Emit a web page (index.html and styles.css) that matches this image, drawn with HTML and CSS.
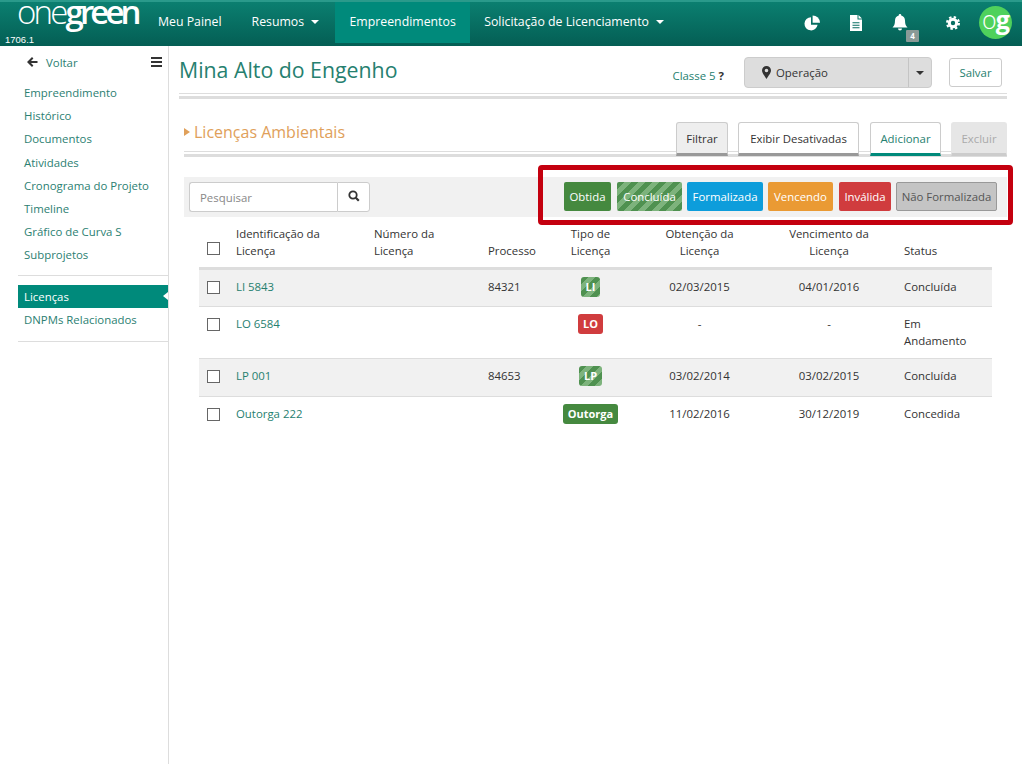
FILE: index.html
```html
<!DOCTYPE html>
<html lang="pt-BR">
<head>
    <meta charset="UTF-8">
    <title>Licenças Ambientais - onegreen</title>
    <link rel="stylesheet" href="styles.css">
</head>
<body>
    <header class="topbar">
        <div class="brand">
            <svg class="logo" width="126" height="34" viewBox="0 0 126 34"><text x="0" y="22"><tspan class="logo-one">one</tspan><tspan class="logo-green">green</tspan></text></svg>
            <div class="version">1706.1</div>
        </div>
        <nav class="topnav">
            <a class="topnav-item">Meu Painel</a>
            <a class="topnav-item">Resumos <i class="caret"></i></a>
            <a class="topnav-item active">Empreendimentos</a>
            <a class="topnav-item">Solicitação de Licenciamento <i class="caret"></i></a>
        </nav>
        <div class="topicons">
            <svg class="ico" width="16" height="16" viewBox="0 0 16 16"><path d="M7 2.2a6.600 6.600 0 1 0 6.600 7.600H7z"/><path d="M8.400 .8v7.400H15.800A7.400 7.400 0 0 0 8.400 .8z" transform="translate(.2 -.4)"/></svg>
            <svg class="ico" width="14" height="16" viewBox="0 0 14 16"><path fill-rule="evenodd" d="M1 0h7.500v4.500H13V16H1zM9.500 0 13 3.500H9.500zM3.500 7.200v1.100h7V7.200zM3.500 9.700v1.100h7V9.700zM3.500 12.200v1.100h7v-1.100z"/></svg>
            <div class="bell">
                <svg class="ico" width="16" height="17" viewBox="0 0 16 17"><path d="M8 0a1.200 1.200 0 0 1 1.200 1.400C11.600 1.900 13 4 13 6.500c0 4 1 5.500 2.500 7H.5C2 12 3 10.500 3 6.500 3 4 4.400 1.900 6.800 1.400A1.200 1.200 0 0 1 8 0zM6 14.500h4a2 2 0 0 1-4 0z"/></svg>
                <span class="bell-count">4</span>
            </div>
            <svg class="ico" width="14" height="14" viewBox="0 0 14 14"><circle cx="7" cy="7" r="3.700" fill="none" stroke="#fff" stroke-width="3"/><circle cx="7" cy="7" r="5.900" fill="none" stroke="#fff" stroke-width="2.200" stroke-dasharray="2.400 2.230"/></svg>
            <div class="avatar"><span class="avatar-o">o</span><span class="avatar-g">g</span></div>
        </div>
    </header>

    <div class="page">
        <aside class="sidebar">
            <div class="back-row">
                <svg class="back-arrow" width="12" height="12" viewBox="0 0 12 12"><path d="M6 1 1 6l5 5 1.400-1.400L5 7.100h6.500V4.900H5l2.400-2.500z"/></svg>
                <span class="back-label">Voltar</span>
                <svg class="menu-ico" width="11" height="10" viewBox="0 0 11 10"><path d="M0 0h11v2H0zM0 4h11v2H0zM0 8h11v2H0z"/></svg>
            </div>
            <ul class="side-list">
                <li>Empreendimento</li>
                <li>Histórico</li>
                <li>Documentos</li>
                <li>Atividades</li>
                <li>Cronograma do Projeto</li>
                <li>Timeline</li>
                <li>Gráfico de Curva S</li>
                <li>Subprojetos</li>
            </ul>
            <ul class="side-list second">
                <li class="active">Licenças</li>
                <li>DNPMs Relacionados</li>
            </ul>
        </aside>

        <main class="content">
            <div class="title-row">
                <h1>Mina Alto do Engenho</h1>
                <span class="classe">Classe 5 <b>?</b></span>
                <div class="phase">
                    <div class="phase-value">
                        <svg width="9" height="13" viewBox="0 0 9 13"><path fill-rule="evenodd" d="M4.500 0A4.500 4.500 0 0 1 9 4.500C9 7 6 10.500 4.500 13 3 10.500 0 7 0 4.500A4.500 4.500 0 0 1 4.500 0zm0 2.700a1.800 1.800 0 1 0 0 3.600 1.800 1.800 0 0 0 0-3.600z"/></svg>
                        Operação
                    </div>
                    <div class="phase-arrow"><i class="caret dark"></i></div>
                </div>
                <button class="btn-save">Salvar</button>
            </div>

            <section class="licences">
                <div class="section-head">
                    <h2>Licenças Ambientais</h2>
                    <div class="actions">
                        <button class="tab-btn pressed">Filtrar</button>
                        <button class="tab-btn show-off">Exibir Desativadas</button>
                        <button class="tab-btn add">Adicionar</button>
                        <button class="tab-btn off">Excluir</button>
                    </div>
                </div>

                <div class="toolbar">
                    <div class="search">
                        <input type="text" placeholder="Pesquisar">
                        <button>
                            <svg width="12" height="12" viewBox="0 0 12 12"><circle cx="5" cy="5" r="3.700" fill="none" stroke="#333" stroke-width="1.800"/><path d="m7.800 7.800 3 3" stroke="#333" stroke-width="2.200"/></svg>
                        </button>
                    </div>
                    <div class="legend">
                        <span class="chip chip-obtida green">Obtida</span>
                        <span class="chip chip-concluida stripes">Concluída</span>
                        <span class="chip chip-formalizada blue">Formalizada</span>
                        <span class="chip chip-vencendo orange">Vencendo</span>
                        <span class="chip chip-invalida red">Inválida</span>
                        <span class="chip chip-nao grey">Não Formalizada</span>
                    </div>
                    <div class="highlight"></div>
                </div>

                <table class="grid">
                    <thead>
                        <tr>
                            <th class="col-check"><i class="box"></i></th>
                            <th class="col-id">Identificação da Licença</th>
                            <th class="col-num">Número da Licença</th>
                            <th class="col-proc">Processo</th>
                            <th class="col-type mid">Tipo de Licença</th>
                            <th class="col-date mid">Obtenção da Licença</th>
                            <th class="col-date2 mid">Vencimento da Licença</th>
                            <th class="col-status">Status</th>
                        </tr>
                    </thead>
                    <tbody>
                        <tr class="odd">
                            <td><i class="box"></i></td>
                            <td class="link">LI 5843</td>
                            <td></td>
                            <td>84321</td>
                            <td class="mid"><span class="tag stripes">LI</span></td>
                            <td class="mid">02/03/2015</td>
                            <td class="mid">04/01/2016</td>
                            <td class="status">Concluída</td>
                        </tr>
                        <tr>
                            <td><i class="box"></i></td>
                            <td class="link">LO 6584</td>
                            <td></td>
                            <td></td>
                            <td class="mid"><span class="tag red">LO</span></td>
                            <td class="mid">-</td>
                            <td class="mid">-</td>
                            <td class="status">Em Andamento</td>
                        </tr>
                        <tr class="odd">
                            <td><i class="box"></i></td>
                            <td class="link">LP 001</td>
                            <td></td>
                            <td>84653</td>
                            <td class="mid"><span class="tag stripes">LP</span></td>
                            <td class="mid">03/02/2014</td>
                            <td class="mid">03/02/2015</td>
                            <td class="status">Concluída</td>
                        </tr>
                        <tr>
                            <td><i class="box"></i></td>
                            <td class="link">Outorga 222</td>
                            <td></td>
                            <td></td>
                            <td class="mid"><span class="tag green">Outorga</span></td>
                            <td class="mid">11/02/2016</td>
                            <td class="mid">30/12/2019</td>
                            <td class="status">Concedida</td>
                        </tr>
                    </tbody>
                </table>
            </section>
        </main>
    </div>
</body>
</html>
```

FILE: styles.css
```css
* {
    box-sizing: border-box;
}

html, body {
    height: 100%;
}

body {
    margin: 0;
    font-family: "Open Sans", "Noto Sans", sans-serif;
    font-size: 11.400px;
    color: #333;
    background: #fff;
    overflow: hidden;
}

/* top bar */
.topbar {
    height: 46px;
    display: flex;
    color: #fff;
    background: linear-gradient(to bottom, #0b7f70, #045e54);
    border-top: 2px solid #2a9a8b;
    padding-bottom: 3px;
}

.brand {
    width: 144px;
    position: relative;
}

.logo {
    display: block;
    margin-left: 17px;
    fill: #fff;
    font-family: "Open Sans", sans-serif;
    font-size: 33px;
}

.logo-one {
    font-weight: 300;
    letter-spacing: -2.800px;
}

.logo-green {
    font-weight: 600;
    letter-spacing: -3.900px;
}

.version {
    position: absolute;
    left: 5px;
    bottom: -3px;
    font-family: "Liberation Sans", sans-serif;
    font-size: 9.500px;
    line-height: 12px;
}

.topnav {
    display: flex;
}

.topnav-item {
    display: flex;
    align-items: center;
    gap: 6px;
    padding: 0 16px 2px 14px;
    font-size: 12.300px;
}

.topnav-item.active {
    width: 135px;
    padding: 0 0 2px;
    justify-content: center;
    background: #008a7b;
}

.caret {
    display: inline-block;
    margin-left: 1px;
    border-top: 4px solid #fff;
    border-left: 4px solid transparent;
    border-right: 4px solid transparent;
}

.caret.dark {
    margin: 0;
    border-top-color: #333;
}

.topicons {
    margin-left: auto;
    display: flex;
    align-items: center;
    gap: 29px;
    padding-right: 10px;
}

.ico {
    fill: #fff;
    display: block;
}

.bell {
    position: relative;
    margin-right: 9px;
}

.bell-count {
    position: absolute;
    left: 14px;
    top: 16px;
    width: 13px;
    height: 12px;
    background: #8a9a97;
    border-radius: 1px;
    font-size: 8px;
    line-height: 12px;
    text-align: center;
    font-weight: 700;
}

.avatar {
    width: 33px;
    height: 33px;
    margin-left: -10px;
    border-radius: 50%;
    background: #4fd15c;
    text-align: center;
    font-size: 25px;
    line-height: 26px;
    letter-spacing: -1px;
}

.avatar-o {
    font-weight: 300;
}

.avatar-g {
    font-weight: 700;
}

/* layout */
.page {
    display: flex;
    height: 718px;
}

.sidebar {
    width: 169px;
    flex: none;
    border-right: 1px solid #ddd;
    padding-left: 18px;
    color: #2b8072;
}

.back-row {
    height: 32px;
    display: flex;
    align-items: center;
    padding: 0 6px 0 8px;
}

.back-arrow {
    fill: #333;
}

.back-label {
    margin-left: 8px;
}

.menu-ico {
    fill: #333;
    margin-left: auto;
}

.side-list {
    list-style: none;
    margin: 3px 0 0;
    padding: 0 0 8px;
    border-bottom: 1px solid #ddd;
}

.side-list li {
    height: 23.200px;
    line-height: 23.200px;
    padding-left: 6px;
    white-space: nowrap;
}

.side-list.second {
    margin-top: 9px;
    padding-bottom: 10px;
}

.side-list li.active {
    position: relative;
    background: #008a7b;
    color: #fff;
}

.side-list li.active::after {
    content: "";
    position: absolute;
    right: 0;
    top: 7px;
    border-top: 4px solid transparent;
    border-bottom: 4px solid transparent;
    border-right: 5px solid #fff;
}

.content {
    flex: 1;
    padding: 0 15px 0 10px;
}

/* title */
.title-row {
    height: 48px;
    display: flex;
    align-items: flex-start;
    border-bottom: 1px solid #ddd;
    box-shadow: 0 2px 0 #fff, 0 5px 0 #ddd;
}

.title-row h1 {
    margin: 9px 0 0;
    font-size: 21.300px;
    font-weight: 400;
    line-height: 30px;
    color: #26806f;
    flex: 1;
}

.classe {
    margin: 21px 20px 0 0;
    line-height: 18px;
    color: #26806f;
}

.classe b {
    color: #333;
}

.phase {
    width: 188px;
    height: 31px;
    margin: 11px 17px 0 0;
    display: flex;
    background: #ddd;
    border: 1px solid #ccc;
    border-radius: 4px;
}

.phase-value {
    flex: 1;
    display: flex;
    align-items: center;
    gap: 5px;
    padding-left: 17px;
}

.phase-value svg {
    fill: #333;
}

.phase-arrow {
    width: 23px;
    display: flex;
    align-items: center;
    justify-content: center;
    border-left: 1px solid #c4c4c4;
}

.btn-save {
    width: 53px;
    height: 29px;
    margin: 12px 5px 0 0;
    background: #fff;
    border: 1px solid #ccc;
    border-radius: 3px;
    color: #26806f;
    font: inherit;
}

/* section */
.licences {
    margin-left: 5px;
}

.section-head {
    height: 58px;
    display: flex;
    align-items: flex-end;
    justify-content: space-between;
    border-bottom: 1px solid #ddd;
    box-shadow: 0 2px 0 #fff, 0 5px 0 #ddd;
}

.section-head h2 {
    position: relative;
    margin: 0 0 7px;
    padding-left: 10px;
    font-size: 16px;
    font-weight: 400;
    line-height: 24px;
    color: #e0a05a;
}

.section-head h2::before {
    content: "";
    position: absolute;
    left: 0;
    top: 8px;
    border-top: 4px solid transparent;
    border-bottom: 4px solid transparent;
    border-left: 6px solid #e0a05a;
}

.actions {
    display: flex;
    gap: 10px;
    margin-bottom: -5px;
}

.tab-btn {
    width: 71px;
    height: 34px;
    padding: 0;
    background: #fff;
    border: 1px solid #ccc;
    border-bottom: 3px solid #999;
    border-radius: 3px 3px 0 0;
    font: inherit;
    color: #333;
}

.tab-btn.pressed {
    width: 52px;
    background: #eee;
}

.tab-btn.show-off {
    width: 121px;
}

.tab-btn.add {
    margin-left: 1px;
    color: #26806f;
    border-bottom-color: #008a7b;
}

.tab-btn.off {
    width: 56px;
    background: #e6e6e6;
    border-color: #e6e6e6;
    border-bottom-color: #ccc;
    color: #aaa;
}

/* search and legend */
.toolbar {
    position: relative;
    height: 40px;
    margin-top: 25px;
    padding: 5px 10px 0 5px;
    display: flex;
    justify-content: space-between;
    background: #f1f1f1;
}

.search {
    display: flex;
    height: 30px;
}

.search input {
    width: 148px;
    padding: 0 10px;
    background: #fff;
    border: 1px solid #ccc;
    border-right: 0;
    border-radius: 3px 0 0 3px;
    font: inherit;
    color: #333;
}

.search input::placeholder {
    color: #888;
}

.search button {
    width: 33px;
    background: #fff;
    border: 1px solid #ccc;
    border-radius: 0 3px 3px 0;
    padding: 0;
}

.legend {
    display: flex;
    gap: 5px;
    height: 29px;
}

.chip {
    display: flex;
    align-items: center;
    justify-content: center;
    border-radius: 2px;
    color: #fff;
    white-space: nowrap;
}

.chip-obtida { width: 47px; }
.chip-concluida { width: 65px; margin-left: 1px; }
.chip-formalizada { width: 76px; }
.chip-vencendo { width: 65px; }
.chip-invalida { width: 52px; margin-left: 1px; }
.chip-nao { width: 101px; }

.green {
    background: #45893f;
}

.stripes {
    background: repeating-linear-gradient(135deg, #4f9150 0, #4f9150 5px, #7db37c 5px, #7db37c 10px);
}

.blue {
    background: #0d9ddb;
}

.orange {
    background: #ea9a34;
}

.red {
    background: #d03c3e;
}

.grey {
    background: #c4c4c4;
    border: 1px solid #999;
    color: #555;
}

/* red annotation box over the toolbar */
.highlight {
    position: absolute;
    left: 354px;
    top: -12px;
    width: 475px;
    height: 60px;
    border: 5px solid #c4000f;
    border-radius: 4px;
}

/* table */
.grid {
    width: 793px;
    margin-left: 15px;
    border-collapse: collapse;
    table-layout: fixed;
}

.grid th {
    height: 51px;
    padding: 0 0 8px;
    font-weight: 400;
    text-align: left;
    vertical-align: bottom;
    line-height: 17px;
    border-bottom: 3px solid #ddd;
}

.grid td {
    height: 38px;
    padding: 8px 0 9px;
    vertical-align: top;
    line-height: 17px;
    border-bottom: 1px solid #ddd;
}

.grid tbody tr:last-child td {
    border-bottom: 0;
}

.grid .odd td {
    background: #f1f1f1;
}

.grid .mid {
    text-align: center;
}

.grid .link {
    color: #26806f;
}

.grid .col-id { padding-right: 30px; }
.grid .col-num { padding-right: 50px; }
.grid .col-date { padding-left: 28px; padding-right: 28px; }
.grid .col-date2 { padding-left: 5px; padding-right: 5px; }
.grid .col-status { padding-left: 24px; }
.grid .status { padding-left: 24px; padding-right: 30px; }

.col-check { width: 37px; }
.col-id { width: 138px; }
.col-num { width: 114px; }
.col-proc { width: 72px; }
.col-type { width: 61px; }
.col-date { width: 157px; }
.col-date2 { width: 102px; }
.col-status { width: 112px; }

.box {
    display: block;
    width: 13px;
    height: 13px;
    margin: 3px 0 0 8px;
    background: #fff;
    border: 1px solid #666;
}

th .box {
    margin-bottom: 4px;
}

.tag {
    display: inline-block;
    margin: -1px 0 -2px;
    padding: 0 5px;
    border-radius: 3px;
    color: #fff;
    font-size: 11px;
    font-weight: 700;
    line-height: 20px;
    vertical-align: top;
}
```
